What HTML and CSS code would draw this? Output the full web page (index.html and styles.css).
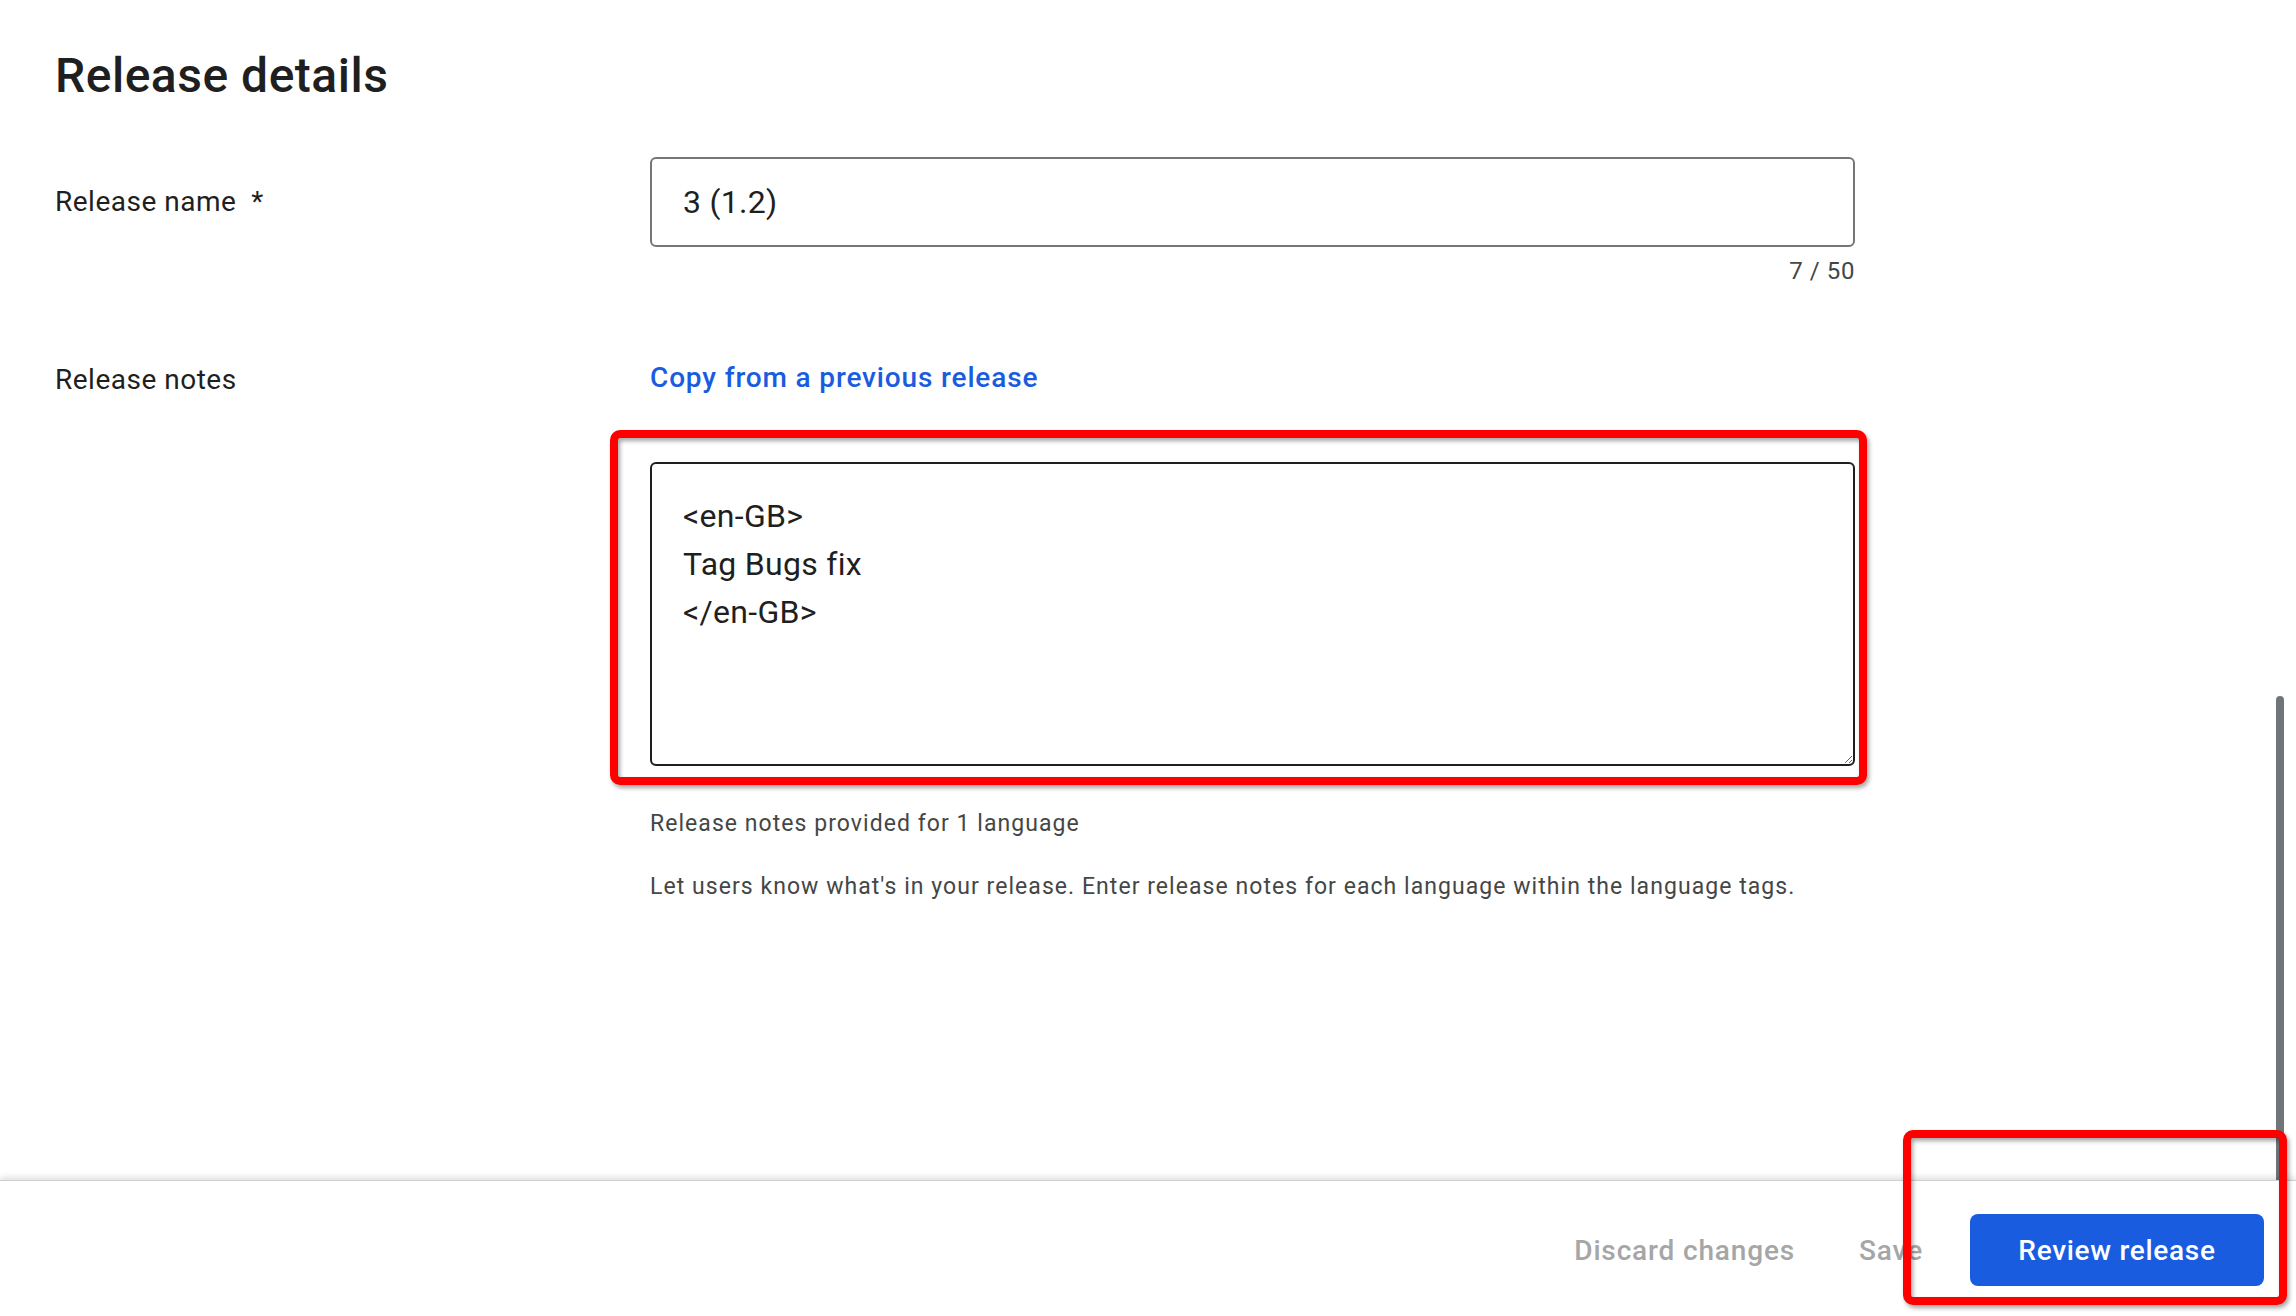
FILE: index.html
```html
<!DOCTYPE html>
<html lang="en">
<head>
<meta charset="utf-8">
<title>Release details</title>
<link rel="stylesheet" href="styles.css">
</head>
<body>
<div class="app">
  <main class="content">
    <h1 class="title">Release details</h1>

    <div class="form-row row-name">
      <div class="label-cell label-name">
        <span class="label">Release name</span><span class="req">*</span>
      </div>
      <div class="field-cell">
        <input class="text-input" type="text" value="3 (1.2)" readonly>
        <div class="counter">7 / 50</div>
      </div>
    </div>

    <div class="form-row row-notes">
      <div class="label-cell label-notes">
        <span class="label">Release notes</span>
      </div>
      <div class="field-cell">
        <a class="link" href="#">Copy from a previous release</a>
        <div class="textarea-wrap">
          <textarea class="notes" readonly>&lt;en-GB&gt;
Tag Bugs fix
&lt;/en-GB&gt;</textarea>
          <div class="annot annot-notes"></div>
        </div>
        <p class="hint hint-first">Release notes provided for 1 language</p>
        <p class="hint hint-second">Let users know what's in your release. Enter release notes for each language within the language tags.</p>
      </div>
    </div>

    <div class="scroll-thumb"></div>
  </main>

  <footer class="actions">
    <button class="text-btn btn-discard" type="button">Discard changes</button>
    <button class="text-btn btn-save" type="button">Save</button>
    <button class="primary-btn" type="button">Review release</button>
    <div class="annot annot-review"></div>
  </footer>
</div>
</body>
</html>
```
FILE: styles.css
```css
html, body {
  margin: 0;
  padding: 0;
  background: #ffffff;
}

body {
  font-family: Roboto, "Noto Sans", "Liberation Sans", sans-serif;
  color: #1f1f1f;
}

.app {
  width: 2296px;
  height: 1316px;
  display: flex;
  flex-direction: column;
  overflow: hidden;
}

.content {
  position: relative;
  height: 1180px;
  flex: none;
  padding: 48px 0 0 55px;
  box-sizing: border-box;
  background: #ffffff;
}

.title {
  margin: 0;
  font-size: 48px;
  line-height: 56px;
  font-weight: 500;
  letter-spacing: 0.5px;
  color: #1f1f1f;
}

.form-row {
  display: grid;
  grid-template-columns: 595px 1205px;
}

.row-name {
  margin-top: 53px;
}

.row-notes {
  margin-top: 79px;
}

.label-cell {
  display: flex;
  align-items: flex-start;
}

.label-name {
  height: 90px;
  align-items: center;
}

.label-notes {
  padding-top: 2px;
}

.label {
  font-size: 28px;
  line-height: 32px;
  letter-spacing: 0.5px;
  color: #1f1f1f;
}

.req {
  font-size: 28px;
  line-height: 32px;
  margin-left: 15px;
  color: #1f1f1f;
}

.field-cell {
  display: flex;
  flex-direction: column;
  align-items: stretch;
}

.text-input {
  box-sizing: border-box;
  width: 1205px;
  height: 90px;
  margin: 0;
  border: 2px solid #747775;
  border-radius: 6px;
  padding: 0 0 0 31px;
  font-family: Roboto, "Noto Sans", "Liberation Sans", sans-serif;
  font-size: 32px;
  letter-spacing: 0.3px;
  color: #1f1f1f;
  background: #ffffff;
  outline: none;
}

.counter {
  margin-top: 12px;
  text-align: right;
  font-size: 24px;
  line-height: 24px;
  letter-spacing: 0.6px;
  color: #444746;
  padding-right: 0;
}

.link {
  align-self: flex-start;
  font-size: 28px;
  line-height: 32px;
  font-weight: 500;
  color: #1a5cdf;
  text-decoration: none;
  letter-spacing: 0.85px;
}

.textarea-wrap {
  position: relative;
  margin-top: 68px;
  width: 1205px;
  height: 304px;
}

.notes {
  display: block;
  box-sizing: border-box;
  width: 1205px;
  height: 304px;
  margin: 0;
  border: 2px solid #1f1f1f;
  border-radius: 6px;
  padding: 28px 28px 0 31px;
  font-family: Roboto, "Noto Sans", "Liberation Sans", sans-serif;
  font-size: 32px;
  line-height: 48px;
  letter-spacing: 0.3px;
  color: #1f1f1f;
  background: #ffffff;
  outline: none;
  resize: both;
  overflow: hidden;
}

.hint {
  margin: 0;
  font-size: 23px;
  line-height: 28px;
  color: #444746;
  letter-spacing: 1.05px;
}

.hint-first {
  margin-top: 44px;
}

.hint-second {
  margin-top: 35px;
}

.annot {
  position: absolute;
  box-sizing: border-box;
  border: 8px solid #ff0000;
  border-radius: 10px;
  filter: drop-shadow(2px 3px 2px rgba(0, 0, 0, 0.35));
  pointer-events: none;
  z-index: 5;
}

.annot-notes {
  left: -40px;
  top: -32px;
  width: 1257px;
  height: 355px;
}

.scroll-thumb {
  position: absolute;
  right: 12px;
  top: 696px;
  bottom: 0;
  width: 8px;
  border-radius: 4px 4px 0 0;
  background: #70757a;
}

.actions {
  position: relative;
  flex: 1;
  display: flex;
  justify-content: flex-end;
  align-items: flex-start;
  padding: 33px 32px 0 0;
  border-top: 1px solid #cfcfcf;
  box-shadow: 0 -3px 6px rgba(0, 0, 0, 0.12);
  background: #ffffff;
  z-index: 2;
}

.text-btn {
  border: none;
  background: none;
  padding: 0;
  height: 72px;
  font-family: Roboto, "Noto Sans", "Liberation Sans", sans-serif;
  font-size: 28px;
  font-weight: 500;
  letter-spacing: 0.85px;
  color: #a6a6a6;
}

.btn-discard {
  margin-right: 64px;
}

.btn-save {
  margin-right: 47px;
}

.primary-btn {
  box-sizing: border-box;
  width: 294px;
  height: 72px;
  border: none;
  border-radius: 8px;
  background: #1a5cdf;
  color: #ffffff;
  font-family: Roboto, "Noto Sans", "Liberation Sans", sans-serif;
  font-size: 28px;
  font-weight: 500;
  letter-spacing: 0.7px;
  padding: 0;
}

.annot-review {
  left: 1903px;
  top: -51px;
  width: 384px;
  height: 175px;
}
```
